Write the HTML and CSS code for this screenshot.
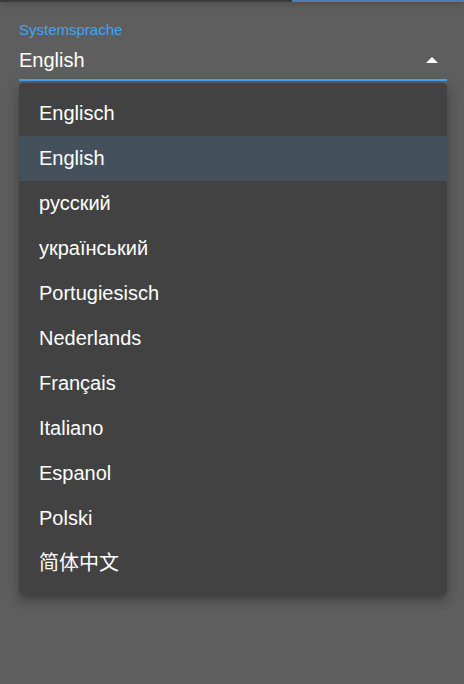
FILE: index.html
```html
<!DOCTYPE html>
<html>
<head>
<meta charset="utf-8">
<link rel="stylesheet" href="styles.css">
</head>
<body>
<div class="topbar"><div class="tab-indicator"></div></div>
<div class="field">
  <div class="label">Systemsprache</div>
  <div class="select">
    <span class="value">English</span>
    <svg class="arrow" width="12" height="6" viewBox="0 0 12 6"><path d="M0 6 L6 0 L12 6 Z" fill="#ffffff"/></svg>
  </div>
  <ul class="menu">
    <li class="item">Englisch</li>
    <li class="item selected">English</li>
    <li class="item">русский</li>
    <li class="item">український</li>
    <li class="item">Portugiesisch</li>
    <li class="item">Nederlands</li>
    <li class="item">Français</li>
    <li class="item">Italiano</li>
    <li class="item">Espanol</li>
    <li class="item">Polski</li>
    <li class="item">简体中文</li>
  </ul>
</div>
</body>
</html>
```
FILE: styles.css
```css
html, body {
  margin: 0;
  padding: 0;
}
body {
  width: 464px;
  height: 684px;
  background: #5e5e5e;
  font-family: "Liberation Sans", Arial, "Noto Sans CJK SC", sans-serif;
  color: #ffffff;
  overflow: hidden;
}
.topbar {
  height: 2px;
  background: #3a3a3a;
  box-shadow: 0 1px 6px rgba(0,0,0,0.45);
  display: flex;
  justify-content: flex-end;
}
.tab-indicator {
  width: 172px;
  height: 2px;
  background: #4a7fb5;
}
.field {
  padding: 0 17px 0 19px;
}
.label {
  margin-top: 20px;
  color: #42a5f5;
  font-size: 15px;
  line-height: 16px;
}
.select {
  display: flex;
  align-items: center;
  justify-content: space-between;
  height: 40px;
  border-bottom: 2px solid #42a5f5;
  box-sizing: border-box;
  margin-top: 3px;
}
.value {
  font-size: 20px;
  line-height: 24px;
}
.arrow {
  margin-right: 9px;
  margin-top: -1px;
}
.menu {
  list-style: none;
  margin: 2px 0 0 0;
  padding: 8px 0;
  background: #424242;
  border-radius: 4px;
  box-shadow: 0 5px 5px -3px rgba(0,0,0,0.2), 0 8px 10px 1px rgba(0,0,0,0.14), 0 3px 14px 2px rgba(0,0,0,0.12);
}
.item {
  height: 45px;
  line-height: 44px;
  padding: 0 20px;
  font-size: 20px;
  color: #ffffff;
}
.item.selected {
  background: #44515d;
}
```
